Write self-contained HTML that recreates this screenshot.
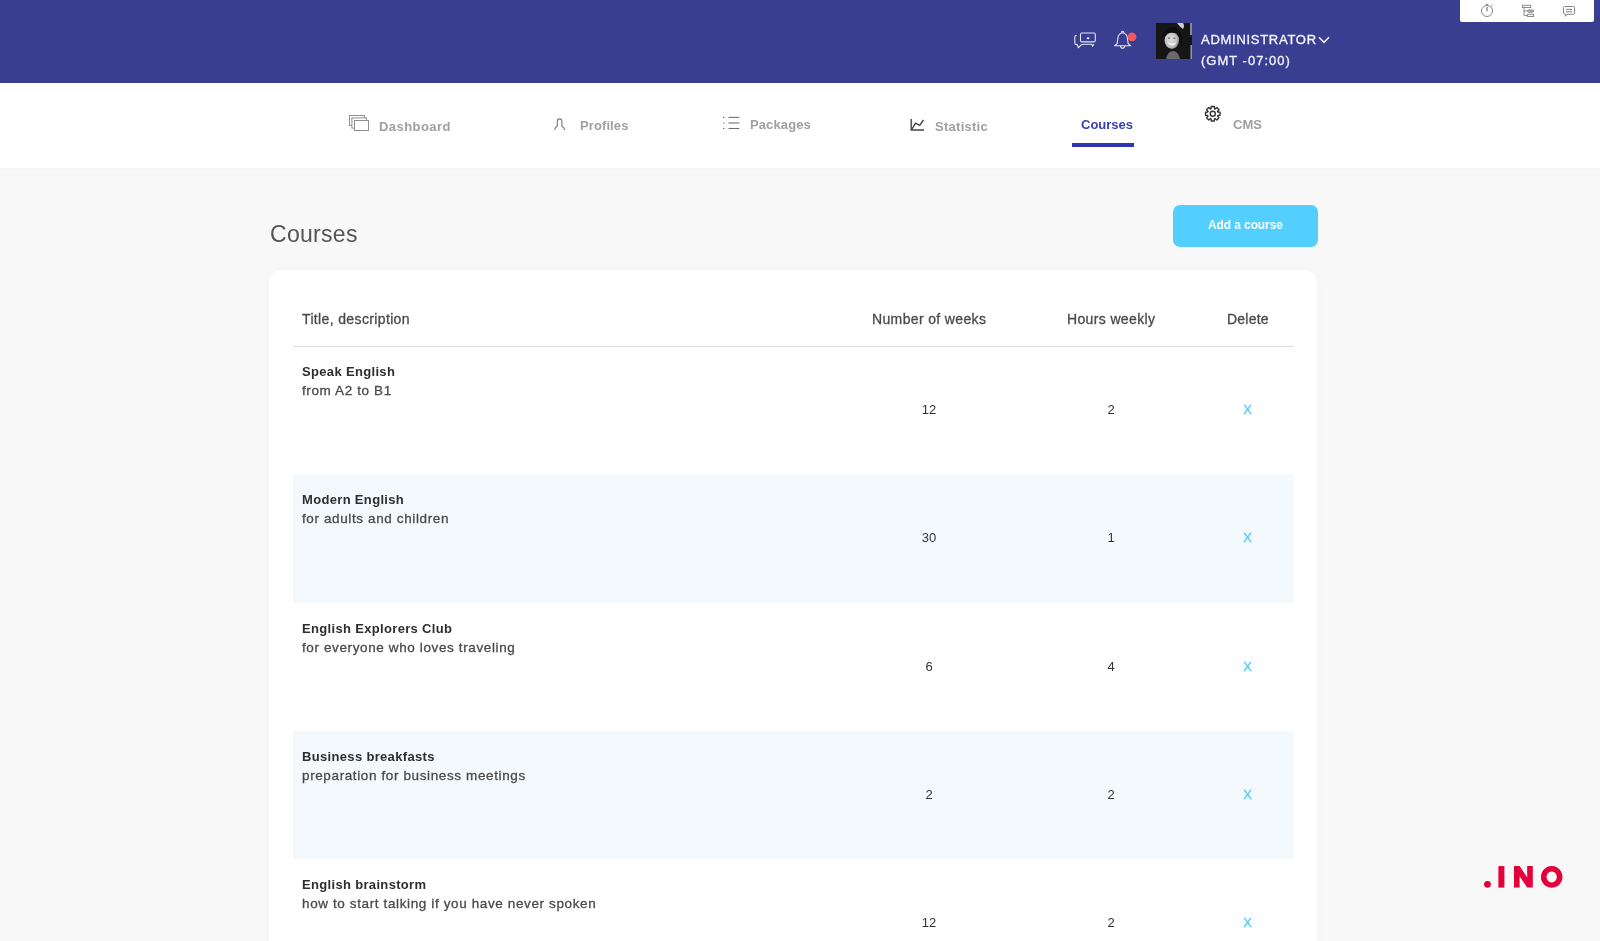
<!DOCTYPE html>
<html><head><meta charset="utf-8">
<style>
*{margin:0;padding:0;box-sizing:border-box}
html,body{width:1600px;height:941px;overflow:hidden;background:#f8f8f8;font-family:"Liberation Sans",sans-serif;}
.abs{position:absolute}
svg{position:absolute;overflow:visible}
#hdr{position:absolute;left:0;top:0;width:1600px;height:83px;background:#393e91}
#nav{position:absolute;left:0;top:83px;width:1600px;height:85px;background:#fff;box-shadow:0 1px 5px rgba(0,0,0,0.025)}
.t{position:absolute;white-space:nowrap;line-height:1}
.t,.row{will-change:transform}
#card{position:absolute;left:269px;top:270px;width:1048px;height:800px;background:#fff;border-radius:12px;box-shadow:0 0 8px rgba(0,0,0,0.03)}
.stripe{position:absolute;left:293px;width:1001px;height:128px;background:#f4f9fd}
.navt{color:#a0a0a0;font-size:13px;font-weight:bold;letter-spacing:0.15px}
.hd{color:#4a4a4a;font-size:14px;letter-spacing:0.36px;-webkit-text-stroke:0.3px #4a4a4a}
.row{position:absolute;left:0;width:1600px;height:128px}
.ti{position:absolute;left:302px;top:19px;color:#2e2e2e;font-size:13px;font-weight:bold;letter-spacing:0.33px;line-height:1;white-space:nowrap}
.de{position:absolute;left:302px;top:37.6px;color:#4a4a4a;font-size:13.5px;letter-spacing:0.62px;line-height:1;white-space:nowrap;-webkit-text-stroke:0.3px #4a4a4a}
.n1,.n2,.x{position:absolute;top:57px;font-size:13px;line-height:1;text-align:center;width:60px;color:#333}
.n1{left:899px}
.n2{left:1081px}
.x{left:1217.5px;color:#50cbfa;-webkit-text-stroke:0.3px #50cbfa}
</style></head><body>
<div id="hdr"></div>
<div id="nav"></div>

<!-- top right white box -->
<div class="abs" style="left:1460px;top:0;width:134px;height:21.5px;background:#fff;border-radius:0 0 2px 2px"></div>
<svg style="left:0;top:0" width="1600" height="30" viewBox="0 0 1600 30">
  <g fill="none" stroke="#8a8a8a" stroke-width="1">
    <circle cx="1487" cy="11" r="5.5"/>
    <line x1="1487" y1="7" x2="1487" y2="11.3" stroke-width="1.2" stroke="#777"/>
    <line x1="1485.8" y1="4.6" x2="1488.2" y2="4.6" stroke-width="1.2"/>
    <line x1="1491" y1="6.3" x2="1492.5" y2="4.9"/>
    <rect x="1522.5" y="5.3" width="8.2" height="2.2"/>
    <path d="M1524 7.4 V15.4 H1527.5 M1524 11 H1527.5"/>
    <rect x="1527.6" y="9.9" width="6" height="2.4" rx="1.1" fill="#b5b5b5"/>
    <rect x="1527.6" y="14.3" width="6" height="2.2"/>
    <path d="M1564.5 6.5 H1573.5 Q1574.6 6.5 1574.6 7.6 V13.2 Q1574.6 14.3 1573.5 14.3 H1567 L1565.4 16.3 L1565.6 14.3 Q1563.5 14.3 1563.5 13.2 V7.6 Q1563.5 6.5 1564.5 6.5 Z"/>
    <line x1="1566" y1="9.4" x2="1572" y2="9.4" stroke-width="1.1"/>
    <line x1="1566" y1="11.8" x2="1572" y2="11.8" stroke-width="1.1"/>
  </g>
</svg>

<!-- header icons -->
<svg style="left:0;top:0" width="1600" height="83" viewBox="0 0 1600 83">
  <g fill="none" stroke="#e6e6f2" stroke-width="1.1" stroke-linejoin="round">
    <path d="M1082 33 H1093.8 Q1095.3 33 1095.3 34.5 V40.4 Q1095.3 41.9 1093.8 41.9 H1082 Q1080.5 41.9 1080.5 40.4 V34.5 Q1080.5 33 1082 33 Z"/>
    <path d="M1076.6 35.4 Q1074.8 35.4 1074.8 37.1 V43 Q1074.8 44.6 1076.4 44.6 H1077.4 L1078.3 47.8 L1081 45 Q1082 44.3 1084 44.3 H1091.8 L1092.6 46.3 L1094 44"/>
  </g>
  <ellipse cx="1088.1" cy="38.2" rx="1.4" ry="1" fill="#fff"/>
  <g fill="none" stroke="#e6e6f2" stroke-width="1.1" stroke-linejoin="round">
    <path d="M1122.6 32.7 Q1118.2 33.3 1117.8 38.5 L1117.2 43.5 L1114.5 45.8 H1130.8 L1128.1 43.5 L1127.5 38.5 Q1127 33.3 1122.6 32.7 Z"/>
    <path d="M1121.3 32.7 Q1121.3 31.2 1122.6 31.2 Q1123.9 31.2 1123.9 32.7"/>
    <path d="M1120.5 46 Q1120.7 48.3 1122.6 48.3 Q1124.5 48.3 1124.7 46"/>
  </g>
  <circle cx="1132" cy="36.8" r="4.4" fill="#f05a5e"/>
  <path d="M1319 37.3 L1324 42.3 L1329 37.3" fill="none" stroke="#f0f0f8" stroke-width="1.6"/>
</svg>

<!-- avatar -->
<svg style="left:1156px;top:23px" width="36" height="36" viewBox="0 0 36 36">
  <defs>
    <radialGradient id="fg" cx="0.45" cy="0.5" r="0.55"><stop offset="0" stop-color="#e0e0e0"/><stop offset="0.7" stop-color="#c4c4c4"/><stop offset="1" stop-color="#777"/></radialGradient>
    <filter id="bl"><feGaussianBlur stdDeviation="0.6"/></filter>
  </defs>
  <rect width="36" height="36" fill="#161616"/>
  <g filter="url(#bl)">
  <path d="M21 0 H27 Q29 3 27 6 Q24 4 21 0 Z" fill="#cfcfcf"/>
  <rect x="34" y="0" width="2" height="12" fill="#8a8a8a"/>
  <rect x="34.5" y="22" width="1.5" height="14" fill="#999"/>
  <path d="M10 36 Q12 28 17 28 Q22 28 24 36 Z" fill="#6a6a6a"/>
  <ellipse cx="15.8" cy="16.5" rx="7.4" ry="9.6" fill="url(#fg)"/>
  <path d="M6 13 Q10 3 19 4.5 Q27 7 26 24 Q24 14 20 10.5 Q15 9 11.5 11 Q8.7 13 8.3 17 Z" fill="#0c0c0c"/>
  <path d="M12.4 20.2 Q16 23.8 19.6 20.2 Q16 21.4 12.4 20.2 Z" fill="#f6f6f6" stroke="#f2f2f2" stroke-width="0.9"/>
  <ellipse cx="13" cy="15.2" rx="1.2" ry="0.6" fill="#666"/>
  <ellipse cx="18.4" cy="15.2" rx="1.2" ry="0.6" fill="#666"/>
  </g>
</svg>
<div class="t" style="left:1200.7px;top:32.8px;color:#f0f0f8;font-size:13px;letter-spacing:0.72px;-webkit-text-stroke:0.35px #f0f0f8">ADMINISTRATOR</div>
<div class="t" style="left:1200.7px;top:53.8px;color:#f0f0f8;font-size:13px;letter-spacing:1px;-webkit-text-stroke:0.35px #f0f0f8">(GMT -07:00)</div>

<!-- nav icons -->
<svg style="left:0;top:83px" width="1600" height="84" viewBox="0 83 1600 84">
  <g stroke="#8f8f8f" stroke-width="1" fill="#fff">
    <rect x="349.5" y="115.5" width="15" height="10"/>
    <rect x="351.9" y="117.9" width="14.6" height="10.2"/>
    <rect x="354.5" y="120.5" width="14" height="10"/>
  </g>
  <path d="M554.6 130 Q555 127.2 557.3 126.2 L557.3 121.4 Q557.3 118.9 559.6 118.9 Q561.9 118.9 561.9 121.4 L561.9 126.2 Q564.2 127.2 564.6 130" fill="none" stroke="#7a7a7a" stroke-width="1.15"/>
  <g stroke="#6f6f6f" stroke-width="1.1">
    <line x1="728.5" y1="117.4" x2="739.3" y2="117.4"/>
    <line x1="728.5" y1="123" x2="739.3" y2="123"/>
    <line x1="728.5" y1="128.5" x2="739.3" y2="128.5"/>
    <line x1="723" y1="117.4" x2="724.4" y2="117.4"/>
    <line x1="723" y1="123" x2="724.4" y2="123"/>
    <line x1="723" y1="128.5" x2="724.4" y2="128.5"/>
  </g>
  <g fill="none" stroke="#444" stroke-width="1.4" stroke-linejoin="miter">
    <path d="M911.2 119 V130 H924"/>
    <path d="M911.8 129.3 L915.5 123.2 L919.8 125.3 L923.4 120"/>
  </g>
  <g transform="translate(1212.8 113.8)">
    <path fill="none" stroke="#333" stroke-width="1.4" stroke-linejoin="round" d="M4.90 -2.03 L5.01 -1.73 L7.24 -1.54 L7.24 1.54 L5.01 1.73 L4.90 2.03 L4.76 2.32 L6.21 4.03 L4.03 6.21 L2.32 4.76 L2.03 4.90 L1.73 5.01 L1.54 7.24 L-1.54 7.24 L-1.73 5.01 L-2.03 4.90 L-2.32 4.76 L-4.03 6.21 L-6.21 4.03 L-4.76 2.32 L-4.90 2.03 L-5.01 1.73 L-7.24 1.54 L-7.24 -1.54 L-5.01 -1.73 L-4.90 -2.03 L-4.76 -2.32 L-6.21 -4.03 L-4.03 -6.21 L-2.32 -4.76 L-2.03 -4.90 L-1.73 -5.01 L-1.54 -7.24 L1.54 -7.24 L1.73 -5.01 L2.03 -4.90 L2.32 -4.76 L4.03 -6.21 L6.21 -4.03 L4.76 -2.32 Z"/>
    <circle r="2.5" fill="none" stroke="#333" stroke-width="1.4"/>
  </g>
</svg>

<!-- nav texts -->
<div class="t navt" style="left:379.4px;top:119.9px;letter-spacing:0.45px">Dashboard</div>
<div class="t navt" style="left:579.7px;top:119px;letter-spacing:0.1px">Profiles</div>
<div class="t navt" style="left:750px;top:118.1px;letter-spacing:0.11px">Packages</div>
<div class="t navt" style="left:935px;top:119.6px;letter-spacing:0.27px">Statistic</div>
<div class="t navt" style="left:1081.2px;top:118.4px;color:#3a41b5;letter-spacing:0">Courses</div>
<div class="abs" style="left:1071.5px;top:143px;width:62.3px;height:4px;background:#3137b0"></div>
<div class="t navt" style="left:1232.5px;top:118px;letter-spacing:0">CMS</div>

<!-- title + button -->
<div class="t" style="left:270px;top:222.7px;color:#555;font-size:23px;letter-spacing:0.3px">Courses</div>
<div class="abs" style="left:1173px;top:205px;width:144.5px;height:42px;background:#52cffe;border-radius:7px"></div>
<div class="t" style="left:1207.5px;top:218.8px;color:#fff;font-size:12px;font-weight:bold;letter-spacing:-0.1px">Add a course</div>

<!-- card -->
<div id="card"></div>
<div class="stripe" style="top:474px;height:128.5px"></div>
<div class="stripe" style="top:730.75px;height:128.25px"></div>
<div class="abs" style="left:293px;top:346px;width:1001px;height:1px;background:#dcdcdc"></div>

<div class="t hd" style="left:302.2px;top:311.6px">Title, description</div>
<div class="t hd" style="left:872.2px;top:311.6px">Number of weeks</div>
<div class="t hd" style="left:1067px;top:311.6px">Hours weekly</div>
<div class="t hd" style="left:1227px;top:311.6px;letter-spacing:0.22px">Delete</div>

<div class="row" style="top:346px">
  <div class="ti">Speak English</div><div class="de">from A2 to B1</div>
  <div class="n1">12</div><div class="n2">2</div><div class="x">X</div>
</div>
<div class="row" style="top:474.25px">
  <div class="ti">Modern English</div><div class="de">for adults and children</div>
  <div class="n1">30</div><div class="n2">1</div><div class="x">X</div>
</div>
<div class="row" style="top:602.5px">
  <div class="ti">English Explorers Club</div><div class="de">for everyone who loves traveling</div>
  <div class="n1">6</div><div class="n2">4</div><div class="x">X</div>
</div>
<div class="row" style="top:730.75px">
  <div class="ti">Business breakfasts</div><div class="de">preparation for business meetings</div>
  <div class="n1">2</div><div class="n2">2</div><div class="x">X</div>
</div>
<div class="row" style="top:859px">
  <div class="ti">English brainstorm</div><div class="de">how to start talking if you have never spoken</div>
  <div class="n1">12</div><div class="n2">2</div><div class="x">X</div>
</div>

<!-- .INO logo -->
<svg style="left:1480px;top:860px" width="90" height="35" viewBox="1480 860 90 35">
  <g fill="#e4003b">
    <circle cx="1487.5" cy="884.3" r="3.4"/>
    <rect x="1498.4" y="866.1" width="6" height="21.5"/>
    <path d="M1514 866.1 H1519.6 L1527.2 877.6 V866.1 H1532.8 V887.6 H1527.2 L1519.6 876.2 V887.6 H1514 Z"/>
    <path fill-rule="evenodd" d="M1551.7 866 A10.8 10.9 0 1 1 1551.69 866 Z M1551.7 871.6 A5.1 5.4 0 1 0 1551.71 871.6 Z"/>
  </g>
</svg>

</body></html>
